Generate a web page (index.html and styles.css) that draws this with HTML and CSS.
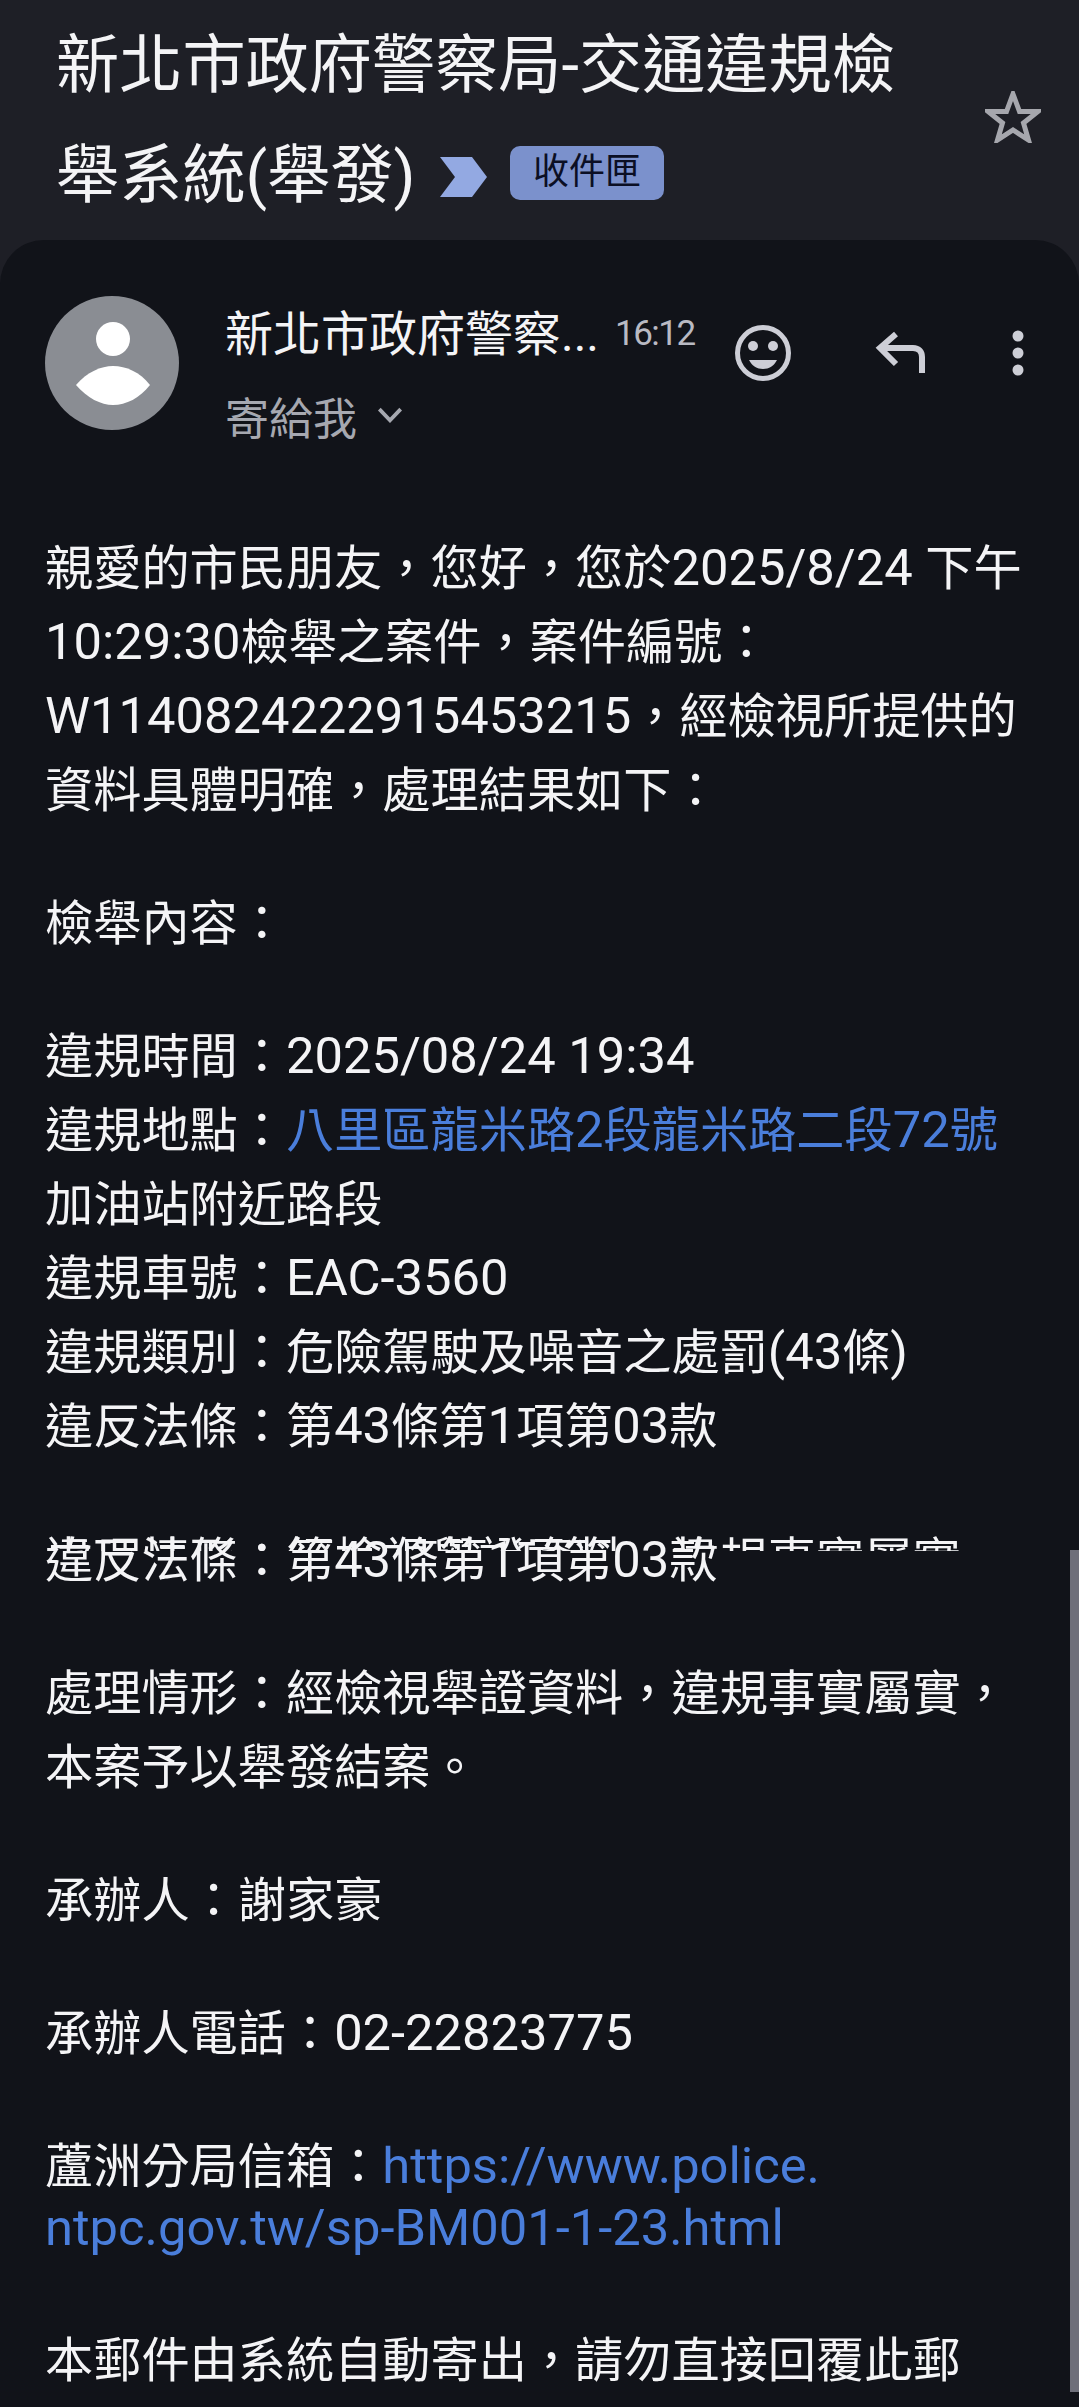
FILE: index.html
```html
<!DOCTYPE html>
<html lang="zh-Hant">
<head>
    <meta charset="UTF-8">
    <meta name="viewport" content="width=device-width, initial-scale=1.0">
    <link rel="stylesheet" href="styles.css">
    <title>新北市政府警察局-交通違規檢舉系統(舉發)</title>
</head>
<body>
    <header class="subject">
        <h1 class="subject-title">
            新北市政府警察局-交通違規檢<br>舉系統(舉發)
            <svg class="tag-arrow" viewBox="0 0 47 40"><polygon points="0,0 32,0 47,20 32,40 0,40 15,20"/></svg>
            <span class="badge">收件匣</span>
        </h1>
        <svg class="star" viewBox="0 0 56 52"><polygon points="28,3 34.500,20.500 53,20.500 38.500,32 43.500,49 28,39 12.500,49 17.500,32 3,20.500 21.500,20.500"/></svg>
    </header>

    <main class="card">
        <div class="sender">
            <svg class="avatar" viewBox="0 0 134 134">
                <circle cx="67" cy="67" r="67" fill="#8a8d93"/>
                <circle cx="68" cy="43" r="17" fill="#fff"/>
                <path d="M31 89 C42 76 56 70 68 70 C81 70 95 76 105 89 C95 102 81 109 68 109 C56 109 42 102 31 89 Z" fill="#fff"/>
            </svg>
            <div class="sender-text">
                <div class="sender-top">
                    <span class="sender-name">新北市政府警察...</span>
                    <span class="sender-time">16:12</span>
                </div>
                <div class="sender-to">
                    寄給我
                    <svg class="chevron" viewBox="0 0 24 15"><path d="M2 2 L12 12.500 L22 2"/></svg>
                </div>
            </div>
            <div class="actions">
                <svg class="icon-smile" viewBox="0 0 56 56">
                    <circle cx="28" cy="28" r="25.500" fill="none" stroke="#cdced6" stroke-width="5"/>
                    <circle cx="18" cy="21" r="5" fill="#cdced6"/>
                    <circle cx="38" cy="21" r="5" fill="#cdced6"/>
                    <path d="M14 35 H42 C39 41 34 44 28 44 C22 44 17 41 14 35 Z" fill="#cdced6"/>
                </svg>
                <svg class="icon-reply" viewBox="0 0 52 44">
                    <path d="M21 3 L5 17 L21 33 M5 17 H38 C44 17 47 21 47 26 V42" fill="none" stroke="#cdced6" stroke-width="6"/>
                </svg>
                <svg class="icon-more" viewBox="0 0 12 46">
                    <circle cx="6" cy="6" r="5.500" fill="#cdced6"/>
                    <circle cx="6" cy="23" r="5.500" fill="#cdced6"/>
                    <circle cx="6" cy="40" r="5.500" fill="#cdced6"/>
                </svg>
            </div>
        </div>

        <article class="message">
            <p>親愛的市民朋友，您好，您於<span class="en">2025/8/24 </span>下午<br><span class="en">10:29:30</span>檢舉之案件，案件編號：<br><span class="en">W1140824222915453215</span>，經檢視所提供的<br>資料具體明確，處理結果如下：</p>
            <p>檢舉內容：</p>
            <p>違規時間：<span class="en">2025/08/24 19:34</span><br>違規地點：<a href="#">八里區龍米路<span class="en">2</span>段龍米路二段<span class="en">72</span>號</a><br>加油站附近路段<br>違規車號：<span class="en">EAC-3560</span><br>違規類別：危險駕駛及噪音之處罰<span class="en">(43</span>條<span class="en">)</span><br>違反法條：第<span class="en">43</span>條第<span class="en">1</span>項第<span class="en">03</span>款</p>
            <p class="seam">違反法條：第<span class="en">43</span>條第<span class="en">1</span>項第<span class="en">03</span>款<span class="seam-ghost">處理情形：經檢視舉證資料，違規事實屬實，</span></p>
            <p>處理情形：經檢視舉證資料，違規事實屬實，<br>本案予以舉發結案。</p>
            <p>承辦人：謝家豪</p>
            <p>承辦人電話：<span class="en">02-22823775</span></p>
            <p>蘆洲分局信箱：<a class="en" href="#">https://www.police.</a><a class="en link-wrap" href="#">ntpc.gov.tw/sp-BM001-1-23.html</a></p>
            <p>本郵件由系統自動寄出，請勿直接回覆此郵</p>
        </article>
        <div class="scrollbar"></div>
    </main>
</body>
</html>
```

FILE: styles.css
```css
* {
  margin: 0;
  padding: 0;
  box-sizing: border-box;
}

body {
  height: 2407px;
  overflow: hidden;
  background-color: #1e1f26;
  font-family: "Roboto", "Noto Sans CJK TC", sans-serif;
  color: #f4f4f6;
}

.subject {
  height: 240px;
  padding: 10px 38px 0 56px;
  display: flex;
  justify-content: space-between;
  align-items: center;
}

.subject-title {
  font-size: 63.200px;
  font-weight: 400;
  line-height: 110px;
  white-space: nowrap;
  margin-top: -10px;
}

.tag-arrow {
  width: 47px;
  height: 40px;
  margin: 0 7px 0 9px;
  vertical-align: 0;
  fill: #93a9e2;
}

.badge {
  display: inline-block;
  width: 154px;
  height: 54px;
  line-height: 52px;
  text-align: center;
  font-size: 36px;
  color: #0b0f24;
  background-color: #7b91cc;
  border-radius: 10px;
  vertical-align: 13px;
}

.star {
  width: 56px;
  height: 52px;
  fill: none;
  stroke: #a6a7ad;
  stroke-width: 5;
  margin-top: -16px;
}

.card {
  position: relative;
  height: 2167px;
  background-color: #111319;
  border-radius: 44px 44px 0 0;
  padding: 56px 0 0 45px;
}

.sender {
  display: flex;
  height: 134px;
}

.avatar {
  width: 134px;
  height: 134px;
  flex-shrink: 0;
}

.sender-text {
  margin-left: 46px;
  width: 471px;
}

.sender-top {
  display: flex;
  align-items: center;
  height: 74px;
  margin-top: -3px;
  white-space: nowrap;
}

.sender-name {
  font-size: 48px;
  width: 390px;
}

.sender-time {
  font-size: 35px;
  color: #b9bac3;
  letter-spacing: -1.500px;
  margin-top: 6px;
}

.sender-to {
  font-size: 44px;
  color: #a6a8b0;
  line-height: 64px;
  margin-top: 21px;
}

.chevron {
  width: 26px;
  height: 16px;
  margin-left: 9px;
  vertical-align: 12px;
  fill: none;
  stroke: #a6a8b0;
  stroke-width: 3.500;
}

.actions {
  position: relative;
  flex: 1;
  display: flex;
  align-items: flex-start;
}

.icon-smile {
  width: 56px;
  height: 56px;
  margin: 29px 0 0 39px;
}

.icon-reply {
  width: 52px;
  height: 44px;
  margin: 35px 0 0 84px;
}

.icon-more {
  width: 12px;
  height: 46px;
  margin: 34px 0 0 85px;
}

.message {
  margin-top: 102px;
  font-size: 48.200px;
  line-height: 74px;
  white-space: nowrap;
}

.message p + p {
  margin-top: 59px;
}

.message a {
  color: #4a7edb;
  text-decoration: none;
}

/* latin runs sit a bit larger than the cjk text around them */
.en {
  font-size: 50.700px;
  line-height: 1;
}

.link-wrap {
  display: block;
  line-height: 74px;
  margin-top: -13px;
}

/* the capture was stitched here, tops of the next line show through */
.message .seam {
  position: relative;
  margin-top: 60px;
}

.seam-ghost {
  position: absolute;
  left: 0;
  top: 0;
  height: 27px;
  overflow: hidden;
}

.scrollbar {
  position: absolute;
  top: 1310px;
  right: 0;
  width: 9px;
  height: 842px;
  background-color: #6e6f7a;
}
```
